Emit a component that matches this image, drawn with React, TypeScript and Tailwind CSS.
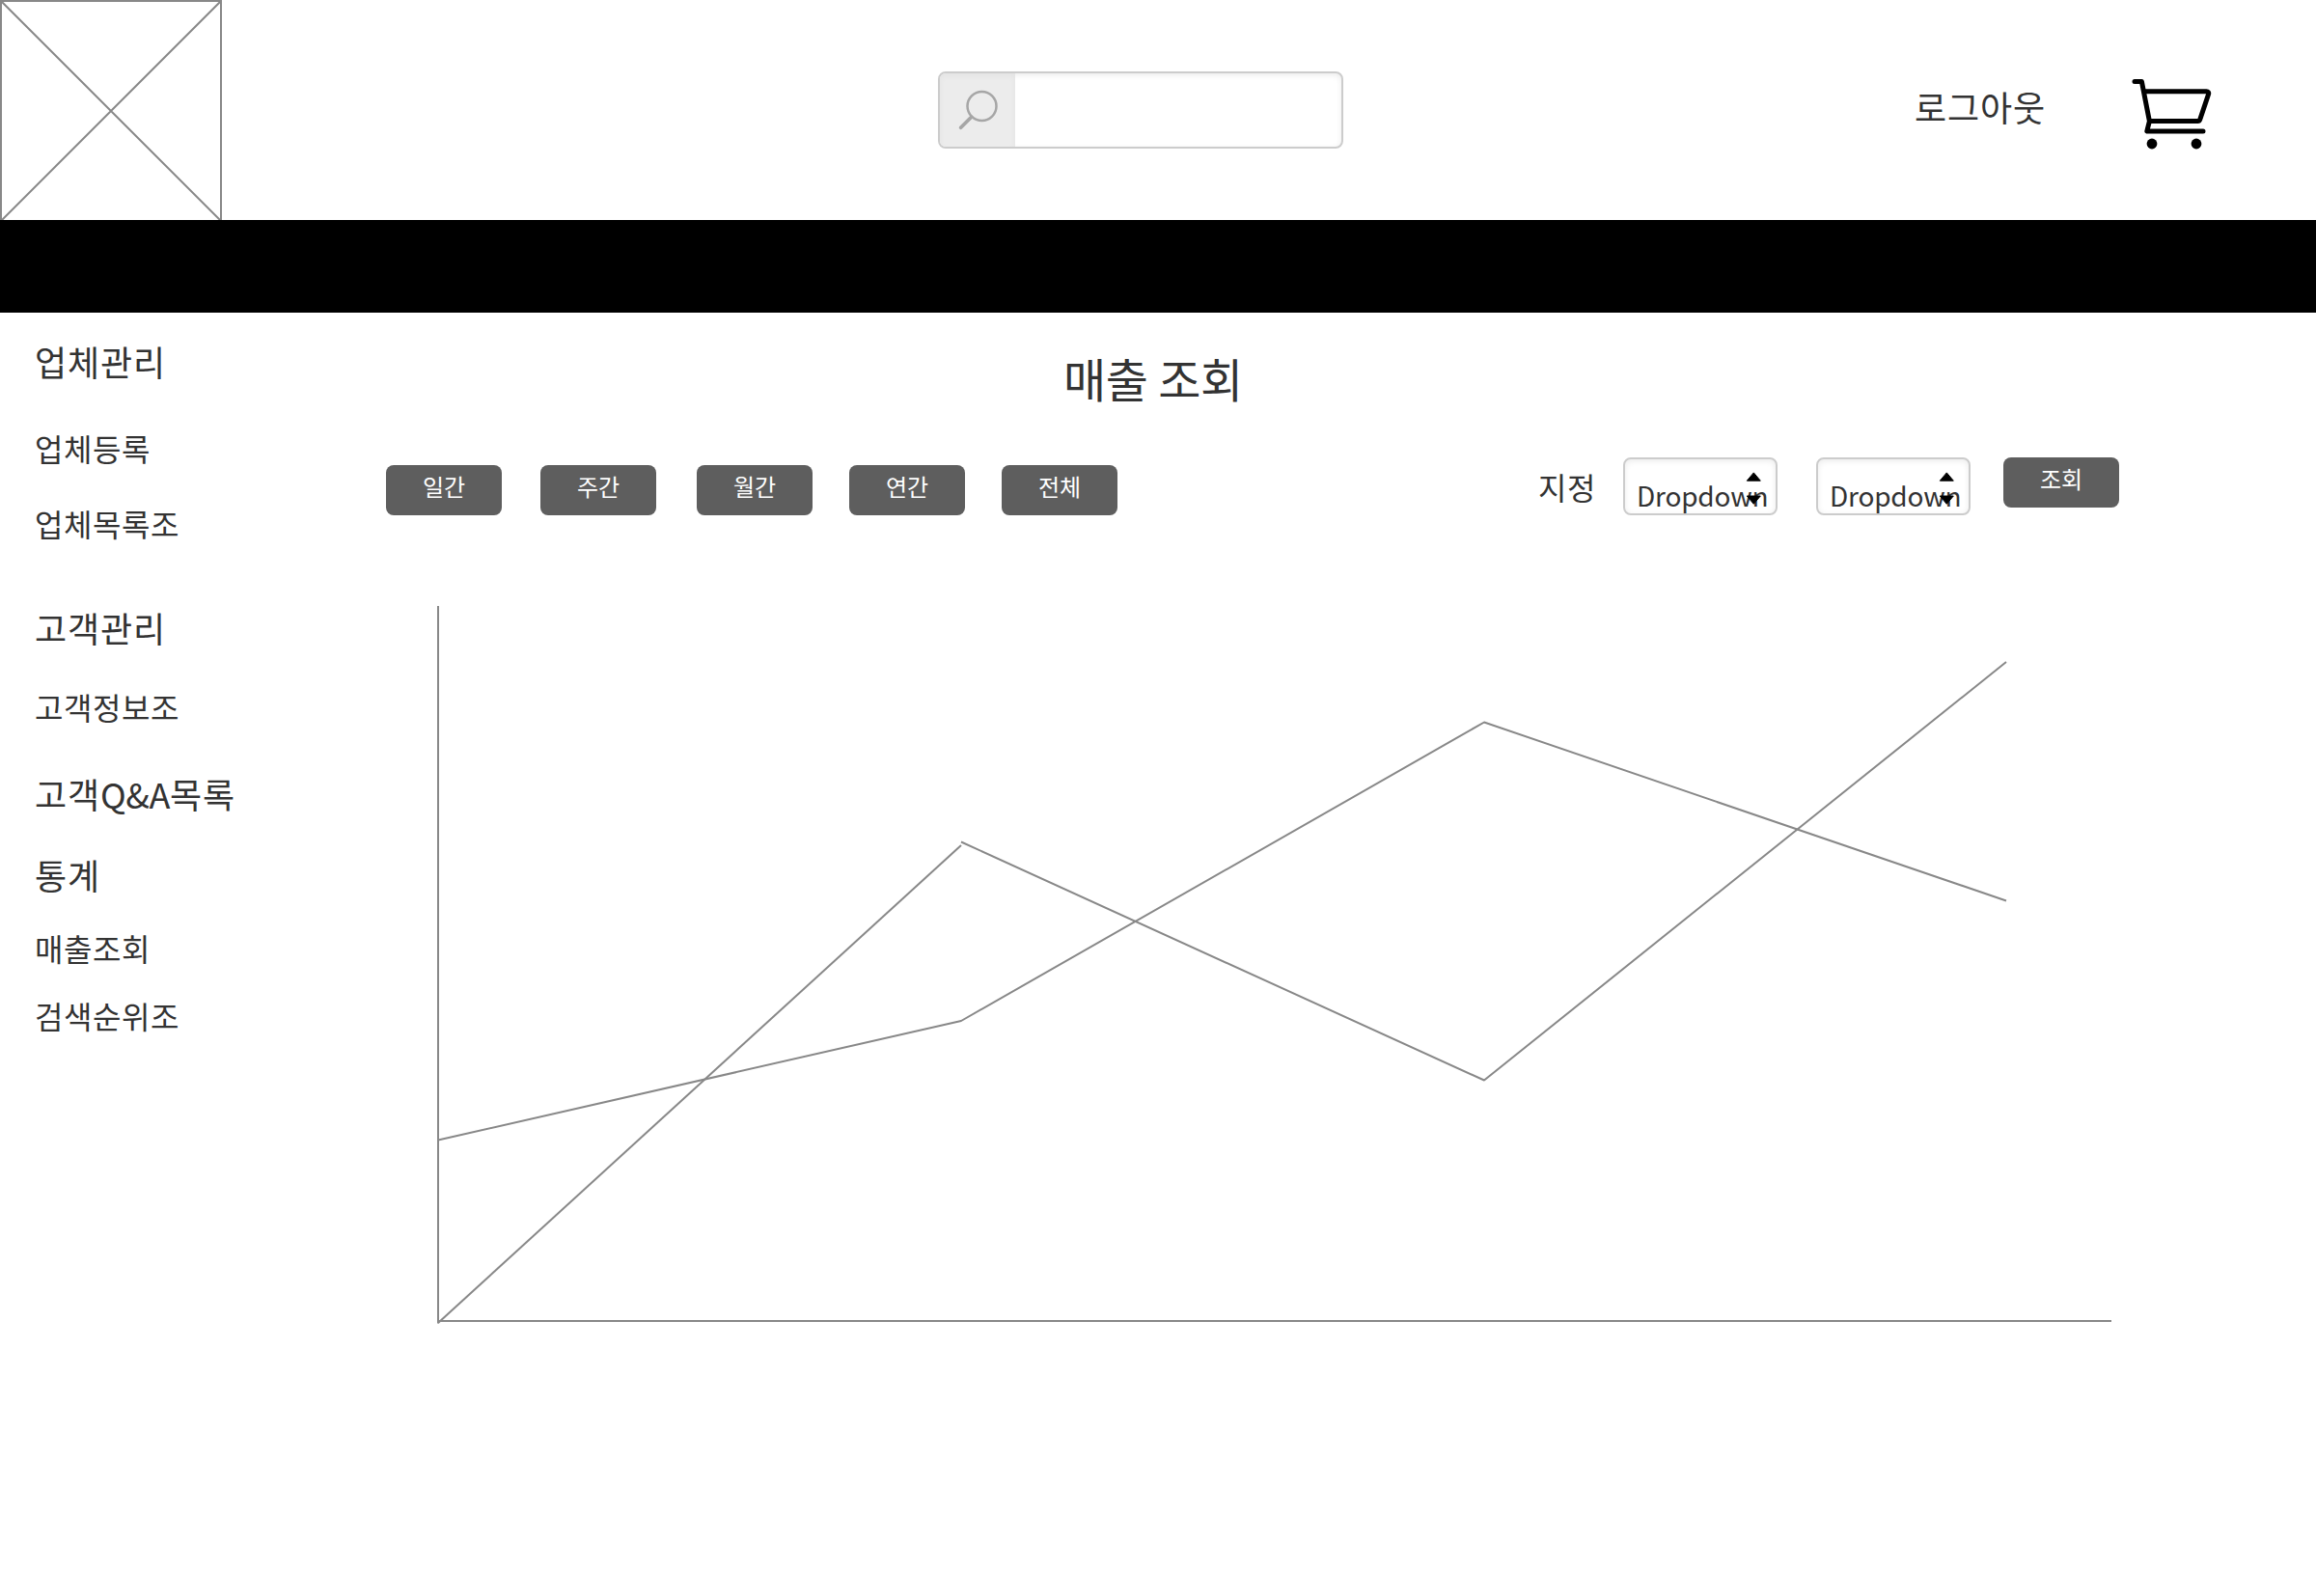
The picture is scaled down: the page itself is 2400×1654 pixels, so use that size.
import type { ReactNode } from "react";

const navItems: { label: ReactNode; className: string }[] = [
  { label: "업체관리", className: "mt-[30px] text-[36px] tracking-[0.88px]" },
  { label: "업체등록", className: "mt-[50px] text-[32px] tracking-[0.56px]" },
  { label: "업체목록조", className: "mt-[38px] text-[32px] tracking-[0.56px]" },
  { label: "고객관리", className: "mt-[68px] text-[36px] tracking-[0.88px]" },
  { label: "고객정보조", className: "mt-[42px] text-[32px] tracking-[0.56px]" },
  {
    label: (
      <>
        고객<span className="tracking-[-0.4px]">Q&amp;A</span>목록
      </>
    ),
    className: "mt-[50px] text-[36px] tracking-[0.88px]",
  },
  { label: "통계", className: "mt-[44px] text-[36px] tracking-[0.88px]" },
  { label: "매출조회", className: "mt-[36px] text-[32px] tracking-[0.56px]" },
  { label: "검색순위조", className: "mt-[30px] text-[32px] tracking-[0.56px]" },
];

function Button({ children, className = "" }: { children: ReactNode; className?: string }) {
  return (
    <button
      className={`h-[52px] w-[120px] shrink-0 rounded-lg bg-[#5e5e5e] pb-2 text-center text-[24px] leading-[44px] tracking-[-0.08px] text-white ${className}`}
    >
      {children}
    </button>
  );
}

function Dropdown({ className = "" }: { className?: string }) {
  return (
    <div
      className={`relative h-[60px] w-[160px] shrink-0 rounded-lg border-2 border-[#ccc] pl-3 pt-[18px] shadow-[inset_0_2px_6px_rgba(0,0,0,0.08)] ${className}`}
    >
      <span className="block whitespace-nowrap text-[28px] leading-[39px] tracking-[-0.2px]">Dropdown</span>
      <svg
        className="absolute left-[125px] top-[13px]"
        width="17"
        height="34"
        viewBox="0 0 17 34"
        stroke="#000"
        strokeLinejoin="round"
      >
        <path d="M8.3 0.9L15.3 9.2H1.3Z" />
        <path d="M8.3 33.3L15.3 25H1.3Z" />
      </svg>
    </div>
  );
}

function Header() {
  return (
    <header className="flex h-[228px]">
      <svg className="shrink-0" width="230" height="228" viewBox="0 0 230 228" fill="none" stroke="#888" strokeWidth="2">
        <rect x="1" y="1" width="228" height="228" />
        <path d="M1 1L229 229M229 1L1 229" />
      </svg>
      <div className="ml-[742px] mt-[74px] flex h-[80px] w-[420px] overflow-hidden rounded-lg border-2 border-[#ccc] shadow-[inset_0_2px_6px_rgba(0,0,0,0.08)]">
        <div className="w-[78px] bg-[#ececec] shadow-[inset_0_3px_6px_rgba(0,0,0,0.04)]">
          <svg width="78" height="76" viewBox="0 0 78 76" fill="none" stroke="#a6a6a6">
            <circle cx="43.5" cy="34" r="15" strokeWidth="2.5" />
            <path d="M32.6 45.2L21.6 56.2" strokeWidth="3.7" strokeLinecap="round" />
          </svg>
        </div>
      </div>
      <span className="ml-[592px] mt-[90px] h-10 text-[36px] leading-[40px] tracking-[0.88px]">로그아웃</span>
      <svg
        className="ml-[88px] mt-[80px]"
        width="86"
        height="76"
        viewBox="0 0 86 76"
        fill="none"
        stroke="#000"
        strokeWidth="5"
        strokeLinecap="round"
        strokeLinejoin="round"
      >
        <path d="M4 4.6H11.4L19.4 45.6H69.5Q71.2 45.6 71.8 43.8L80.6 17.5Q81.3 14.8 78.4 14.8H14M19.4 45.6L16.8 56H75" />
        <circle cx="22" cy="69" r="5.4" fill="#000" stroke="none" />
        <circle cx="68" cy="69" r="5.4" fill="#000" stroke="none" />
      </svg>
    </header>
  );
}

function Chart() {
  return (
    <svg
      className="ml-[180px] mt-[94px]"
      width="1738"
      height="746"
      viewBox="452 628 1738 746"
      fill="none"
      stroke="#888"
      strokeWidth="2"
      strokeLinejoin="bevel"
    >
      <path d="M454 628V1371.5M454 1369H2188" />
      <path d="M454 1181.5L996 1058L1538 748.5L2079 933.5" />
      <path d="M454 1371L996 876" />
      <path d="M996 872.5L1538 1119.5L2079 686" />
    </svg>
  );
}

export default function App() {
  return (
    <div className="h-[1654px] w-[2400px] overflow-hidden bg-white font-['Noto_Sans_CJK_KR',sans-serif] text-[#333]">
      <Header />
      <div className="h-[96px] bg-black" />
      <div className="flex">
        <nav className="flex w-[272px] shrink-0 flex-col pl-9">
          {navItems.map((item, index) => (
            <a key={index} className={`block h-10 whitespace-nowrap leading-[40px] ${item.className}`}>
              {item.label}
            </a>
          ))}
        </nav>
        <main className="flex flex-1 flex-col">
          <h1 className="ml-[830px] mt-[37px] h-[60px] text-[48px] leading-[60px] tracking-[-0.3px]">매출 조회</h1>
          <div className="ml-[128px] mt-[53px] flex h-[60px]">
            <Button className="mt-2">일간</Button>
            <Button className="ml-10 mt-2">주간</Button>
            <Button className="ml-[42px] mt-2">월간</Button>
            <Button className="ml-[38px] mt-2">연간</Button>
            <Button className="ml-[38px] mt-2">전체</Button>
            <span className="ml-[436px] mt-[10px] w-[60px] whitespace-nowrap text-[32px] leading-[40px] tracking-[0.56px]">
              지정
            </span>
            <Dropdown className="ml-[28px]" />
            <Dropdown className="ml-10" />
            <Button className="ml-[34px]">조회</Button>
          </div>
          <Chart />
        </main>
      </div>
    </div>
  );
}
